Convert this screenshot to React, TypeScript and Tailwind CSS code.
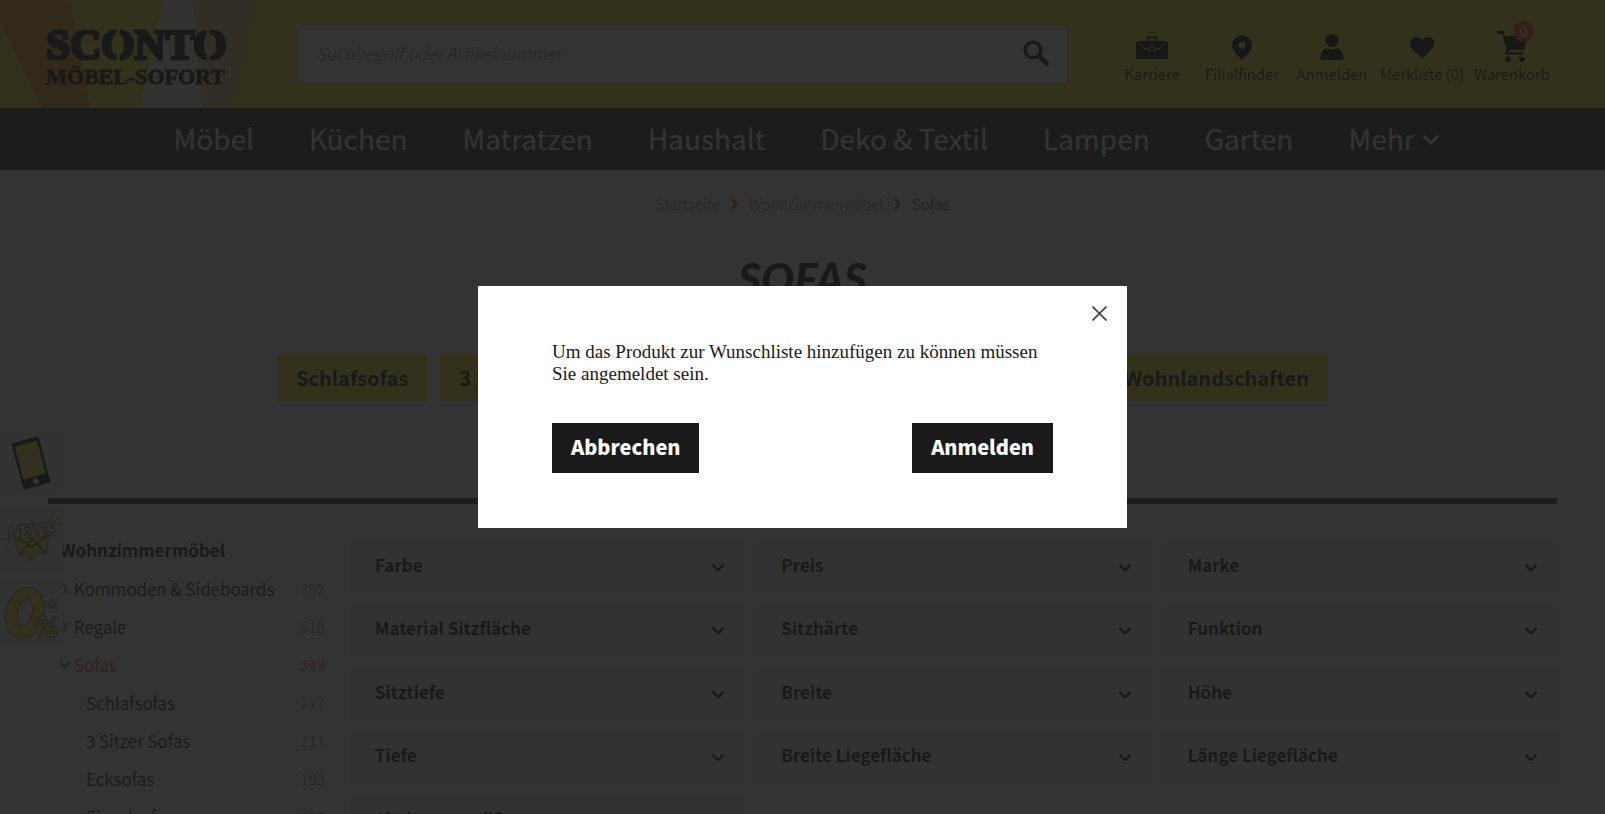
import type { ReactNode } from 'react';

const sans = "font-['Noto_Sans_CJK_SC','Source_Sans_Pro',sans-serif]";

const navItems = ['Möbel', 'Küchen', 'Matratzen', 'Haushalt', 'Deko & Textil', 'Lampen', 'Garten'];

const filters = [
  'Farbe', 'Preis', 'Marke',
  'Material Sitzfläche', 'Sitzhärte', 'Funktion',
  'Sitztiefe', 'Breite', 'Höhe',
  'Tiefe', 'Breite Liegefläche', 'Länge Liegefläche',
  'Sitzbezugsgröße',
];

type Category = { name: string; count: number; kind: 'closed' | 'open' | 'child' };

const categories: Category[] = [
  { name: 'Kommoden & Sideboards', count: 792, kind: 'closed' },
  { name: 'Regale', count: 518, kind: 'closed' },
  { name: 'Sofas', count: 343, kind: 'open' },
  { name: 'Schlafsofas', count: 227, kind: 'child' },
  { name: '3 Sitzer Sofas', count: 211, kind: 'child' },
  { name: 'Ecksofas', count: 198, kind: 'child' },
  { name: 'Einzelsofas', count: 117, kind: 'child' },
];

function Chevron({ className, stroke = 2 }: { className: string; stroke?: number }) {
  return (
    <svg viewBox="0 0 16 10" className={className} fill="none" stroke="currentColor" strokeWidth={stroke} strokeLinecap="round" strokeLinejoin="round" aria-hidden="true">
      <path d="M1.5 1.5 8 8l6.5-6.5" />
    </svg>
  );
}

function CrumbArrow() {
  return (
    <svg viewBox="0 0 7 12" className="h-3 w-[7px]" fill="none" stroke="currentColor" strokeWidth="2.8" aria-hidden="true">
      <path d="M1 .8Q3.4 3.4 5 6 3.4 8.600 1 11.200" />
    </svg>
  );
}

function Logo() {
  return (
    <svg viewBox="0 0 256 108" className="h-[108px] w-64 shrink-0" role="img" aria-label="Sconto Möbel-Sofort">
      <path d="M0 0h70l20 108H42L0 22z" fill="#ffa424" />
      <path d="M164 0h29l9 108h-62z" fill="#fff4df" />
      <path d="M193 0h63l-25 108h-29z" fill="#ffd080" />
      <g fill="#1a1a1a" stroke="#1a1a1a" fontFamily="'Liberation Serif', serif" fontWeight="bold">
        <text x="46" y="59" fontSize="43" strokeWidth="3">SCONTO</text>
        <text x="46" y="84" fontSize="22" strokeWidth="1">MÖBEL-SOFORT</text>
      </g>
      <g strokeWidth="3">
        <path d="M118 27v35" stroke="#ffe52d" />
        <path d="M208 27v35" stroke="#ffd080" />
      </g>
    </svg>
  );
}

function HeaderLink({ label, children }: { label: string; children: ReactNode }) {
  return (
    <a href="#" className="flex w-[90px] flex-col items-center">
      <span className="flex h-8 items-center justify-center pb-0.5">{children}</span>
      <span className="text-[15px] leading-5 font-[350] whitespace-nowrap">{label}</span>
    </a>
  );
}

function Header() {
  return (
    <header>
      <div className="flex h-[108px] bg-[#ffe52d] pr-12">
        <Logo />
        <form className="mt-[26px] ml-[42px] flex h-[57px] max-w-[769px] flex-1 items-center bg-white px-[18px] shadow-[0_0_2px_#bbb]">
          <input aria-label="Suche" placeholder="Suchbegriff oder Artikelnummer" className="min-w-0 flex-1 bg-transparent pb-1 text-[17px] font-light italic outline-none placeholder:text-[#777]" />
          <button type="button" aria-label="Suchen" className="pb-1">
            <svg viewBox="0 0 26 26" className="size-[26px]" fill="none" stroke="#1a1a1a" aria-hidden="true">
              <circle cx="10" cy="10" r="7.800" strokeWidth="3.600" />
              <path d="m16 16 7.500 7.500" strokeWidth="4.500" strokeLinecap="round" />
            </svg>
          </button>
        </form>
        <div className="mt-8 ml-auto flex">
          <HeaderLink label="Karriere">
            <svg viewBox="0 0 32 24" className="h-6 w-8" aria-hidden="true">
              <path d="M0 6h32v18H0z" />
              <path d="M11.500 6V2.500h9V6" fill="none" stroke="#1a1a1a" strokeWidth="2" />
              <path d="m1 6 7.500 7.800h15L31 6M12.800 12h6.400v3.600h-6.400z" fill="none" stroke="#ffe52d" strokeWidth="1" />
              <path d="M13.400 12.600h5.200V15h-5.200z" />
            </svg>
          </HeaderLink>
          <HeaderLink label="Filialfinder">
            <svg viewBox="0 0 20 25" className="h-[25px] w-5" aria-hidden="true">
              <path fillRule="evenodd" d="M10 0A10 10 0 0 0 0 10c0 6 6 11 10 15 4-4 10-9 10-15A10 10 0 0 0 10 0m0 6.800a3.400 3.400 0 1 1 0 6.800 3.400 3.400 0 0 1 0-6.800" />
            </svg>
          </HeaderLink>
          <HeaderLink label="Anmelden">
            <svg viewBox="0 0 24 26" className="h-[26px] w-6" aria-hidden="true">
              <circle cx="12" cy="6.500" r="6.500" />
              <path d="M.5 26C.5 20 2 15 6.500 14.500c2 0 3 1 5.500 1s3.500-1 5.500-1C22 15 23.500 20 23.500 26z" />
            </svg>
          </HeaderLink>
          <HeaderLink label="Merkliste (0)">
            <svg viewBox="0 0 24 21" className="h-[21px] w-6" aria-hidden="true">
              <path d="M12 21C8 17 0 12.500 0 6.500 0 .5 8.500-2.500 12 3c3.500-5.500 12-2.500 12 3.500S16 17 12 21" />
            </svg>
          </HeaderLink>
          <HeaderLink label="Warenkorb">
            <span className="relative">
              <svg viewBox="0 0 30 32" className="h-8 w-[30px]" aria-hidden="true">
                <path d="M0 0h5.500q1.200 0 1.600 1.400L8 5h22l-2 12.500q-.3 1.500-2 1.500H12l-.6 2.200h14.800v2.600H9.500q-2 0-1.300-2.200l1.400-4L5 3H1.500Q0 3 0 0" />
                <circle cx="11" cy="28.500" r="2.800" />
                <circle cx="25" cy="28.500" r="2.800" />
              </svg>
              <span className="absolute -top-2.5 left-4 flex size-[21px] items-center justify-center rounded-full bg-[#f04e23] text-[15px] text-white">0</span>
            </span>
          </HeaderLink>
        </div>
      </div>
      <nav className="flex h-[62px] items-center justify-center gap-[55px] bg-[#333] pb-0.5 pl-[7px] text-[28px] leading-10 whitespace-nowrap text-white">
        {navItems.map((item) => (
          <a key={item} href="#">{item}</a>
        ))}
        <a href="#" className="flex items-center gap-2">
          Mehr
          <Chevron className="mt-1 h-2.5 w-4" stroke={2.6} />
        </a>
      </nav>
    </header>
  );
}

const chip = 'flex h-[47px] items-center bg-[#ffe52d] px-[19px] text-xl font-bold whitespace-nowrap';

function Sidebar() {
  return (
    <aside className="w-[277px] shrink-0 pl-3">
      <h2 className="flex h-[38px] items-center text-[17px] font-bold">Wohnzimmermöbel</h2>
      <ul className="mt-px">
        {categories.map(({ name, count, kind }) => (
          <li key={name}>
            <a href="#" className={kind === 'open' ? 'flex h-[38px] items-center text-[#f04e23]' : 'flex h-[38px] items-center'}>
              <span className={kind === 'child' ? 'w-[26px]' : 'w-3.5 text-[#1a1a1a]'}>
                {kind === 'closed' && (
                  <svg viewBox="0 0 8 12" className="h-3 w-2" fill="none" stroke="currentColor" strokeWidth="1.300" aria-hidden="true">
                    <path d="m3 1 3.500 5L3 11" />
                  </svg>
                )}
                {kind === 'open' && <Chevron className="h-1.5 w-2.5" stroke={2.4} />}
              </span>
              <span className="flex-1 text-[17px] font-[350]">{name}</span>
              <span className={kind === 'open' ? 'text-[15px] font-[350]' : 'text-[15px] font-[350] text-[#999]'}>{count}</span>
            </a>
          </li>
        ))}
      </ul>
    </aside>
  );
}

function SideTabs() {
  return (
    <div className="absolute top-[432px] left-0 flex flex-col gap-3">
      <a href="#" aria-label="App" className="block size-[63px] bg-[#f2f2f2]">
        <svg viewBox="0 0 63 63" aria-hidden="true">
          <g transform="rotate(-15 31 31)">
            <rect x="17" y="7" width="28" height="48" rx="2" fill="#1a1a1a" />
            <path d="M19.500 11h23v34h-23z" fill="#ffe52d" />
            <path d="m19.500 30 23-11v8l-23 11zM19.500 41l23-11v3l-23 11z" fill="#eddc8a" />
            <circle cx="31" cy="50" r="3" fill="#f5f5f5" />
          </g>
        </svg>
      </a>
      <a href="#" aria-label="Newsletter" className="block size-[63px] bg-[#f2f2f2]">
        <svg viewBox="0 0 63 63" aria-hidden="true">
          <path d="m14 29 18-14 17 12-3 19-10 1-6 8 1-7-12 1z" fill="#ffe52d" stroke="#777" />
          <path d="m15 30 17 10 16-12M20 49l12-17 14 14" fill="none" stroke="#444" strokeWidth="1.300" />
          <path d="m49 15 4-9M52 16l9-7M54 18l8-2M1 32l9 2M4 38l7-1M8 44l5-3" fill="none" stroke="#e8cf2a" strokeWidth="2" />
          <text x="8" y="30" transform="rotate(-6 30 25)" fontFamily="Lato, sans-serif" fontWeight="900" fontStyle="italic" fontSize="17" fill="#fff" stroke="#777" strokeWidth="2" paintOrder="stroke">NEWS</text>
        </svg>
      </a>
      <a href="#" aria-label="Finanzierung" className="block size-[63px] bg-[#f2f2f2]">
        <svg viewBox="0 0 63 63" aria-hidden="true">
          <g fill="none" strokeLinecap="round">
            <ellipse cx="25" cy="31" rx="13" ry="20" transform="rotate(14 25 31)" stroke="#777" strokeWidth="13" />
            <ellipse cx="25" cy="31" rx="13" ry="20" transform="rotate(14 25 31)" stroke="#ffe52d" strokeWidth="11" />
            <g stroke="#666" strokeWidth="5">
              <circle cx="41.500" cy="40" r="4" />
              <circle cx="52" cy="50" r="4" />
              <path d="M54 37 40 54" />
            </g>
            <g stroke="#ffe52d" strokeWidth="3">
              <circle cx="41.500" cy="40" r="4" />
              <circle cx="52" cy="50" r="4" />
              <path d="M54 37 40 54" />
            </g>
          </g>
          <path d="m52 17 1.500 3.500 4-.5-2.500 3 2 4-4-1.500-3.500 2.500.5-4-3.500-2 4-1z" fill="#ffe52d" stroke="#777" />
        </svg>
      </a>
    </div>
  );
}

function Modal() {
  return (
    <div className="fixed inset-0 flex items-center justify-center bg-[#1a1a1a]/89">
      <div role="dialog" aria-modal="true" aria-labelledby="wishlist-message" className="relative w-[649px] bg-white px-[74px] py-[55px]">
        <button type="button" aria-label="Schließen" className="absolute top-5 right-5">
          <svg viewBox="0 0 15 15" className="size-[15px]" fill="none" stroke="#444" strokeWidth="1.700" aria-hidden="true">
            <path d="m.5.5 14 14M14.500.5l-14 14" />
          </svg>
        </button>
        <p id="wishlist-message" className="font-['Liberation_Serif',serif] text-[19px] leading-[22px] text-[#1a1a1a]">
          Um das Produkt zur Wunschliste hinzufügen zu können müssen Sie angemeldet sein.
        </p>
        <div className="mt-[38px] flex justify-between text-xl font-black text-white">
          <button type="button" className="h-[50px] bg-[#1a1a1a] px-[19px] pb-0.5">Abbrechen</button>
          <button type="button" className="h-[50px] bg-[#1a1a1a] px-[19px] pb-0.5">Anmelden</button>
        </div>
      </div>
    </div>
  );
}

export default function App() {
  return (
    <div className={`relative h-screen overflow-hidden bg-white text-[#1a1a1a] ${sans}`}>
      <Header />
      <main className="px-12">
        <div className="mt-6 flex h-5 items-center justify-center gap-[11px] text-[15px] font-light text-[#f04e23]">
          <a href="#">Startseite</a>
          <CrumbArrow />
          <a href="#">Wohnzimmermöbel</a>
          <CrumbArrow />
          <span className="text-[#1a1a1a]">Sofas</span>
        </div>
        <h1 className="mt-10 text-center font-['Lato',sans-serif] text-[44px] leading-[48px] font-black italic">SOFAS</h1>
        <div className="mx-auto mt-[52px] flex max-w-[1051px] gap-[13px]">
          <a href="#" className={chip}>Schlafsofas</a>
          <a href="#" className={chip}>3 Sitzer Sofas</a>
          <a href="#" className={`${chip} grow`}>Ecksofas</a>
          <a href="#" className={`${chip} grow`}>Einzelsofas</a>
          <a href="#" className={chip}>Wohnlandschaften</a>
        </div>
        <hr className="mt-[97px] border-t-[6px] border-[#333]" />
        <div className="mt-[27px] flex gap-[25px]">
          <Sidebar />
          <div className="mt-[11px] grid h-[305px] flex-1 grid-cols-3 content-between gap-x-3">
            {filters.map((filter) => (
              <button key={filter} type="button" className="flex h-[51px] items-center justify-between bg-[#f0f0f0] pr-5 pb-1.5 pl-[25px] text-[17px] font-bold">
                {filter}
                <Chevron className="mt-1.5 h-2 w-3" stroke={3.2} />
              </button>
            ))}
          </div>
        </div>
      </main>
      <SideTabs />
      <Modal />
    </div>
  );
}
